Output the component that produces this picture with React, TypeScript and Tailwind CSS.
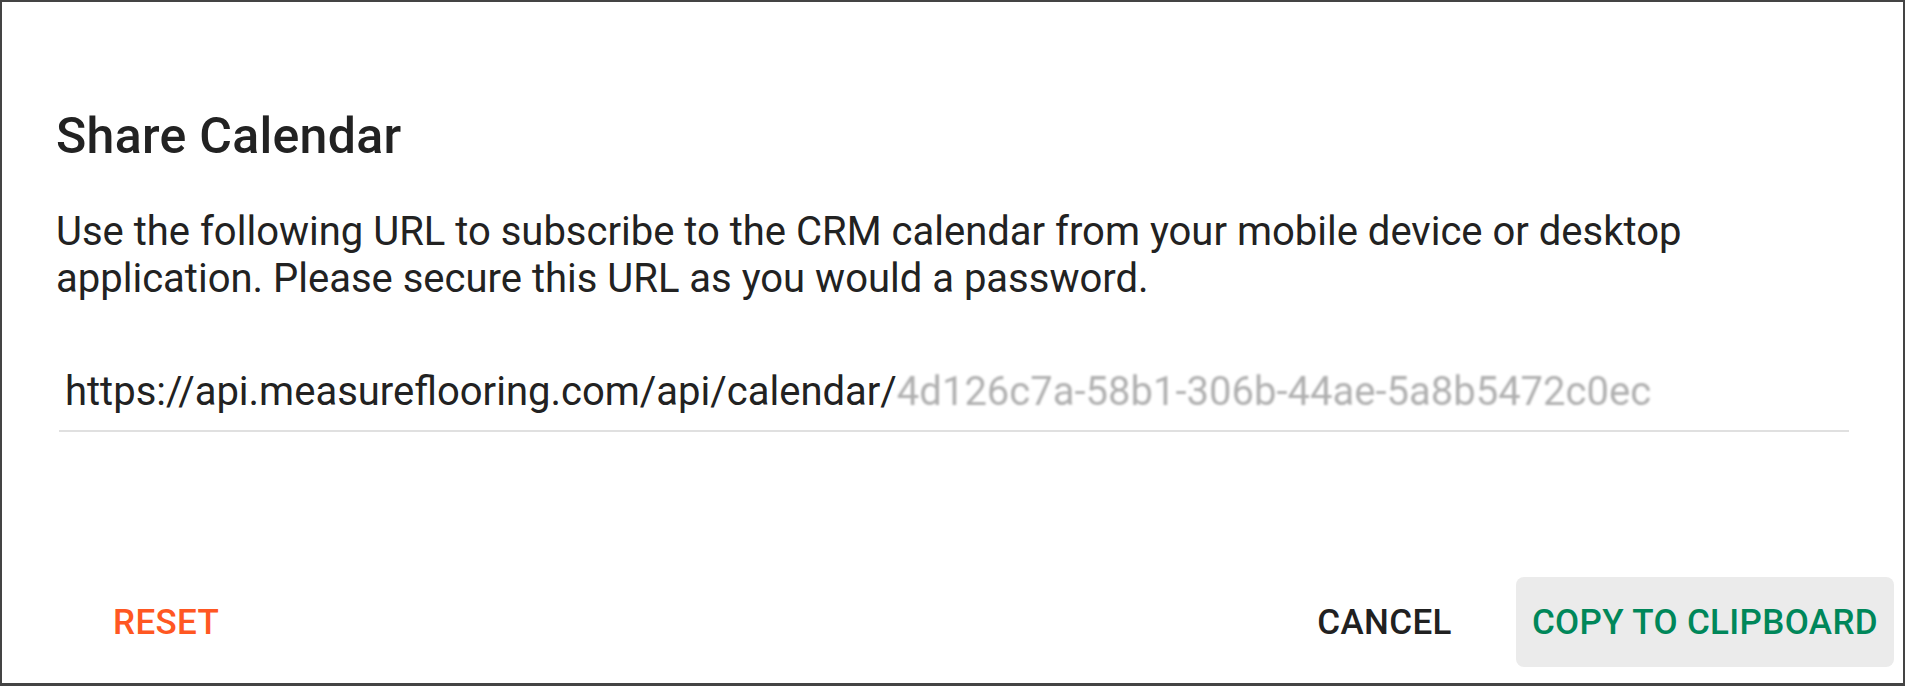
import React from "react";

const calendarUrl = "https://api.measureflooring.com/api/calendar/";
const token = "4d126c7a-58b1-306b-44ae-5a8b5472c0ec";

function DialogButton({
  children,
  className,
}: {
  children: React.ReactNode;
  className?: string;
}) {
  return (
    <button
      type="button"
      className={
        "h-[90px] px-4 rounded-[8px] text-[35px] font-medium uppercase tracking-[0.35px] leading-none " +
        (className ?? "")
      }
    >
      {children}
    </button>
  );
}

export default function App() {
  return (
    <div className="w-[1905px] h-[686px] bg-white border-2 border-b-[3px] border-[#444444] flex flex-col font-[Roboto,sans-serif] text-[#212121]">
      {/* Title */}
      <h2 className="pl-[54px] mt-[104px] text-[50px] font-medium leading-[60px] tracking-[0.3px] text-[#222222]">
        Share Calendar
      </h2>

      {/* Description */}
      <p className="pl-[54px] mt-[42px] w-[1847px] text-[40px] leading-[47px] text-[#222222]">
        Use the following URL to subscribe to the CRM calendar from your mobile device or desktop
        application. Please secure this URL as you would a password.
      </p>

      {/* URL field */}
      <div className="ml-[57px] mt-[66px] w-[1790px] border-b-2 border-[#e0e0e0] pb-[15px] pl-[6px]">
        <div className="text-[40px] leading-[47px] whitespace-nowrap overflow-hidden text-[#222222]">
          <span>{calendarUrl}</span>
          <span className="text-[#b0b0b0] blur-[1.2px]">{token}</span>
        </div>
      </div>

      {/* Actions */}
      <div className="mt-auto flex items-center pl-[95px] pr-[9px] pb-[16px]">
        <DialogButton className="text-[#ff5722]">Reset</DialogButton>
        <div className="flex-1" />
        <DialogButton className="text-[#212121]">Cancel</DialogButton>
        <DialogButton className="ml-[48px] bg-[#ebebeb] text-[#00875a]">Copy to Clipboard</DialogButton>
      </div>
    </div>
  );
}
